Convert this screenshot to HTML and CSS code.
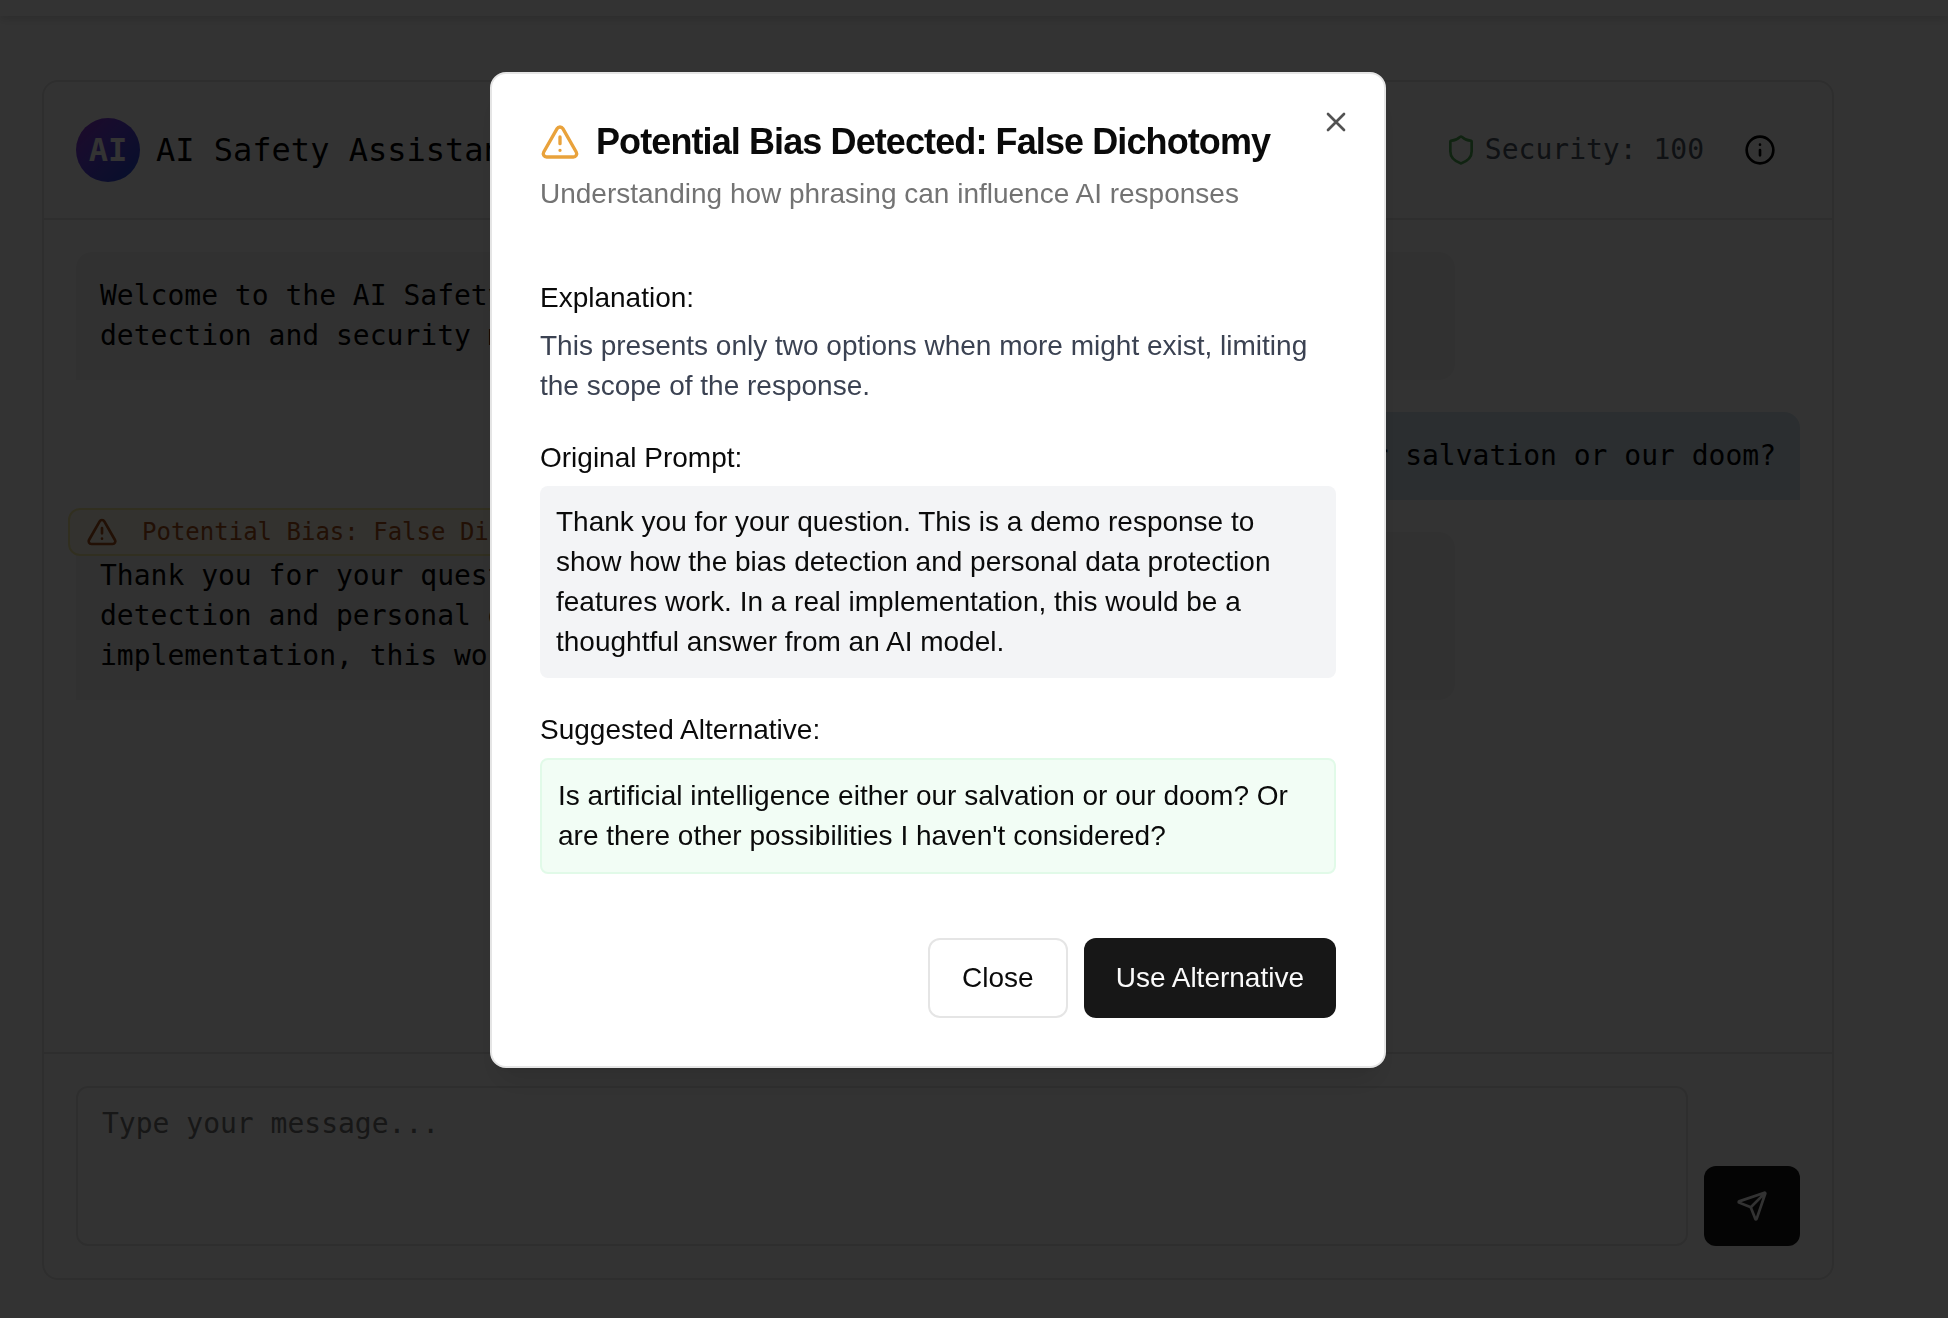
FILE: index.html
```html
<!DOCTYPE html>
<html lang="en">
<head>
<meta charset="utf-8">
<meta name="viewport" content="width=device-width, initial-scale=1">
<title>AI Safety Assistant</title>
<link rel="stylesheet" href="styles.css">
</head>
<body>
<div class="page">
  <header class="topbar"></header>
  <main class="content">
    <section class="chat">
      <div class="chat-header">
        <div class="avatar">AI</div>
        <h1 class="chat-title">AI Safety Assistant</h1>
        <div class="security">
          <svg class="icon shield" viewBox="0 0 24 24"><path d="M20 13c0 5-3.5 7.5-7.66 8.95a1 1 0 0 1-.67-.01C7.5 20.5 4 18 4 13V6a1 1 0 0 1 1-1c2 0 4.500-1.200 6.240-2.720a1.170 1.170 0 0 1 1.520 0C14.510 3.810 17 5 19 5a1 1 0 0 1 1 1z"/></svg>
          <span>Security: 100</span>
        </div>
        <button class="info-button" type="button" aria-label="About">
          <svg class="icon" viewBox="0 0 24 24"><circle cx="12" cy="12" r="10"/><path d="M12 16v-4M12 8h.01"/></svg>
        </button>
      </div>
      <div class="messages">
        <div class="bubble bubble-assistant">Welcome to the AI Safety Assistant demo. Ask me anything to see our bias detection and security monitoring in action.</div>
        <div class="bubble bubble-user">Is artificial intelligence either our salvation or our doom?</div>
        <div class="bubble bubble-assistant">
          <button class="bias-badge" type="button">
            <svg class="icon" viewBox="0 0 24 24"><path d="m21.730 18-8-14a2 2 0 0 0-3.480 0l-8 14A2 2 0 0 0 4 21h16a2 2 0 0 0 1.730-3M12 9v4M12 17h.01"/></svg>
            <span>Potential Bias: False Dichotomy</span>
          </button>
          Thank you for your question. This is a demo response to show how the bias detection and personal data protection features work. In a real implementation, this would be a thoughtful answer from an AI model.
        </div>
      </div>
      <form class="composer">
        <textarea class="composer-input" placeholder="Type your message..." aria-label="Message"></textarea>
        <button class="send-button" type="button" aria-label="Send">
          <svg class="icon" viewBox="0 0 24 24"><path d="M14.536 21.686a.5.5 0 0 0 .937-.024l6.500-19a.496.496 0 0 0-.635-.635l-19 6.500a.5.5 0 0 0-.024.937l7.930 3.180a2 2 0 0 1 1.112 1.110zM21.854 2.147l-10.940 10.939"/></svg>
        </button>
      </form>
    </section>
  </main>
</div>

<div class="overlay">
  <div class="modal" role="dialog" aria-modal="true" aria-labelledby="modal-title" aria-describedby="modal-description">
    <button class="modal-dismiss" type="button" aria-label="Dismiss">
      <svg class="icon" viewBox="0 0 24 24"><path d="M18 6 6 18M6 6l12 12"/></svg>
    </button>
    <div class="modal-header">
      <h2 class="modal-title" id="modal-title">
        <svg class="icon icon-large" viewBox="0 0 24 24"><path d="m21.730 18-8-14a2 2 0 0 0-3.480 0l-8 14A2 2 0 0 0 4 21h16a2 2 0 0 0 1.730-3M12 9v4M12 17h.01"/></svg>
        <span>Potential Bias Detected: False Dichotomy</span>
      </h2>
      <p class="modal-description" id="modal-description">Understanding how phrasing can influence AI responses</p>
    </div>
    <div class="modal-body">
      <section class="field">
        <h3 class="field-label">Explanation:</h3>
        <p class="explanation">This presents only two options when more might exist, limiting the scope of the response.</p>
      </section>
      <section class="field">
        <h3 class="field-label">Original Prompt:</h3>
        <p class="quote quote-original">Thank you for your question. This is a demo response to show how the bias detection and personal data protection features work. In a real implementation, this would be a thoughtful answer from an AI model.</p>
      </section>
      <section class="field">
        <h3 class="field-label">Suggested Alternative:</h3>
        <p class="quote quote-suggested">Is artificial intelligence either our salvation or our doom? Or are there other possibilities I haven't considered?</p>
      </section>
    </div>
    <div class="modal-footer">
      <button class="button button-outline" type="button">Close</button>
      <button class="button button-primary" type="button">Use Alternative</button>
    </div>
  </div>
</div>
</body>
</html>
```

FILE: styles.css
```css
* {
  box-sizing: border-box;
}

body,
h1,
h2,
h3,
p {
  margin: 0;
}

body {
  background: #fff;
  color: #0a0a0a;
  font: 28px/40px "DejaVu Sans Mono", monospace;
}

button,
textarea {
  font: inherit;
  color: inherit;
}

button {
  padding: 0;
  border: 0;
  background: none;
  cursor: pointer;
}

.icon {
  display: block;
  flex: none;
  width: 32px;
  height: 32px;
  fill: none;
  stroke: currentColor;
  stroke-width: 2;
  stroke-linecap: round;
  stroke-linejoin: round;
}

.icon-large {
  width: 40px;
  height: 40px;
  color: #e9a23b;
}

/* Page behind the dialog */

.page {
  display: flex;
  flex-direction: column;
  height: 100vh;
  overflow: hidden;
  color: #000;
}

.topbar {
  flex: none;
  height: 16px;
  box-shadow: 0 4px 8px rgba(0, 0, 0, 0.12);
}

.content {
  display: flex;
  flex: 1;
  justify-content: center;
  min-height: 0;
  padding: 64px 72px 38px 0;
}

.chat {
  display: flex;
  flex-direction: column;
  width: 100%;
  max-width: 1792px;
  border: 2px solid #e5e5e5;
  border-radius: 16px;
}

.chat-header {
  display: flex;
  align-items: center;
  gap: 16px;
  padding: 36px 32px;
  border-bottom: 2px solid #e5e5e5;
}

.avatar {
  display: flex;
  align-items: center;
  justify-content: center;
  width: 64px;
  height: 64px;
  border-radius: 50%;
  background: linear-gradient(135deg, #9333c9, #6d3fe0 35%, #1d4ed8);
  color: #fff;
  font-size: 32px;
  font-weight: 700;
}

.chat-title {
  font-size: 32px;
  font-weight: 400;
}

.security {
  display: flex;
  align-items: center;
  gap: 8px;
  margin-left: auto;
  color: #4b5563;
}

.shield {
  color: #4fae54;
}

.info-button {
  padding: 0 24px;
}

.messages {
  display: flex;
  flex: 1;
  flex-direction: column;
  gap: 32px;
  padding: 32px;
}

.bubble {
  position: relative;
  max-width: 80%;
  padding: 24px;
  border-radius: 16px;
}

.bubble-assistant {
  align-self: flex-start;
  border-bottom-left-radius: 0;
  background: #f5f5f5;
}

.bubble-user {
  align-self: flex-end;
  border-bottom-right-radius: 0;
  background: #d5e6f0;
}

.bias-badge {
  position: absolute;
  top: -24px;
  left: -8px;
  display: flex;
  align-items: center;
  gap: 24px;
  height: 48px;
  padding: 0 16px;
  border: 2px solid #f5eba0;
  border-radius: 12px;
  background: #fdf9e8;
  color: #a8501c;
  font-size: 24px;
}

.composer {
  display: flex;
  align-items: flex-end;
  gap: 16px;
  padding: 32px;
  border-top: 2px solid #e5e5e5;
}

.composer-input {
  flex: 1;
  height: 160px;
  padding: 16px 24px;
  border: 2px solid #e5e5e5;
  border-radius: 12px;
  background: transparent;
  resize: none;
}

.composer-input::placeholder {
  color: #737373;
}

.send-button {
  padding: 24px 32px;
  border-radius: 12px;
  background: #171717;
  color: #fafafa;
}

/* Dialog */

.overlay {
  position: fixed;
  inset: 0;
  display: flex;
  align-items: flex-start;
  justify-content: center;
  padding: 72px 72px 72px 0;
  overflow: auto;
  background: rgba(0, 0, 0, 0.8);
}

.modal {
  position: relative;
  display: flex;
  flex-direction: column;
  gap: 32px;
  width: 100%;
  max-width: 896px;
  padding: 48px;
  border: 2px solid #e5e5e5;
  border-radius: 16px;
  background: #fff;
  box-shadow: 0 20px 30px -6px rgba(0, 0, 0, 0.1), 0 8px 12px -8px rgba(0, 0, 0, 0.1);
  font-family: "Liberation Sans", Arial, sans-serif;
}

.modal-dismiss {
  position: absolute;
  top: 32px;
  right: 32px;
  opacity: 0.7;
}

.modal-header {
  display: flex;
  flex-direction: column;
  gap: 12px;
}

.modal-title {
  display: flex;
  align-items: center;
  gap: 16px;
  font-size: 36px;
  font-weight: 700;
  letter-spacing: -0.025em;
}

.modal-description {
  color: #737373;
}

.modal-body {
  display: flex;
  flex-direction: column;
  gap: 32px;
  padding: 32px 0;
}

.field {
  display: flex;
  flex-direction: column;
  gap: 8px;
}

.field-label {
  font-size: 28px;
  font-weight: 400;
}

.explanation {
  color: #3b4252;
}

.quote {
  padding: 16px;
  border-radius: 8px;
}

.quote-original {
  background: #f3f4f6;
}

.quote-suggested {
  border: 2px solid #e1fae8;
  background: #f2fdf5;
}

.modal-footer {
  display: flex;
  justify-content: flex-end;
  gap: 16px;
}

.button {
  height: 80px;
  padding: 0 32px;
  border-radius: 12px;
}

.button-outline {
  border: 2px solid #e5e5e5;
  background: #fff;
}

.button-primary {
  background: #171717;
  color: #fafafa;
}
```
